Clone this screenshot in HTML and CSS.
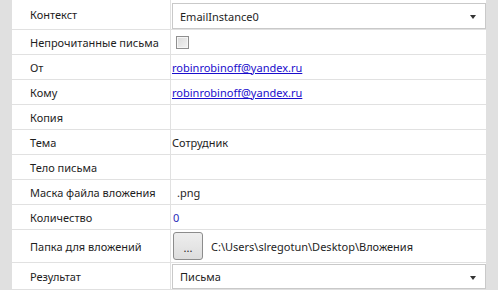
FILE: index.html
```html
<!DOCTYPE html>
<html lang="ru">
<head>
<meta charset="utf-8">
<link rel="stylesheet" href="styles.css">
</head>
<body>
<div class="frame">
  <div class="grid">
    <div class="row first">
      <div class="label">Контекст</div>
      <div class="value"><div class="combo"><span class="combo-text">EmailInstance0</span><span class="arrow"></span></div></div>
    </div>
    <div class="row">
      <div class="label">Непрочитанные письма</div>
      <div class="value"><span class="checkbox"></span></div>
    </div>
    <div class="row">
      <div class="label">От</div>
      <div class="value"><a class="link" href="#">robinrobinoff@yandex.ru</a></div>
    </div>
    <div class="row">
      <div class="label">Кому</div>
      <div class="value"><a class="link" href="#">robinrobinoff@yandex.ru</a></div>
    </div>
    <div class="row">
      <div class="label">Копия</div>
      <div class="value"></div>
    </div>
    <div class="row">
      <div class="label">Тема</div>
      <div class="value">Сотрудник</div>
    </div>
    <div class="row">
      <div class="label">Тело письма</div>
      <div class="value"></div>
    </div>
    <div class="row">
      <div class="label">Маска файла вложения</div>
      <div class="value indent">.png</div>
    </div>
    <div class="row">
      <div class="label">Количество</div>
      <div class="value number">0</div>
    </div>
    <div class="row folder">
      <div class="label">Папка для вложений</div>
      <div class="value"><span class="btn">...</span><span class="path">C:\Users\slregotun\Desktop\Вложения</span></div>
    </div>
    <div class="row last">
      <div class="label">Результат</div>
      <div class="value"><div class="combo"><span class="combo-text">Письма</span><span class="arrow"></span></div></div>
    </div>
  </div>
</div>
</body>
</html>
```
FILE: styles.css
```css
html, body {
  margin: 0;
  padding: 0;
}
body {
  background: #e0e0e0;
  width: 498px;
  height: 290px;
  overflow: hidden;
  font-family: "Noto Sans", "Open Sans", sans-serif;
  font-size: 11px;
  color: #1e1e1e;
}
.frame {
  display: flex;
  padding: 0 12px 0 12px;
}
.grid {
  width: 474px;
  background: #ffffff;
  display: flex;
  flex-direction: column;
}
.row {
  display: grid;
  grid-template-columns: 158px 316px;
  height: 24px;
  border-bottom: 1px solid #e1e1e1;
}
.row.first {
  height: 29px;
}
.row.folder {
  height: 32px;
}
.row.last {
  height: 26px;
  border-bottom: none;
}
.label {
  display: flex;
  align-items: center;
  padding-left: 18px;
  white-space: nowrap;
}
.value {
  display: flex;
  align-items: center;
  border-left: 1px solid #e1e1e1;
  padding-left: 1px;
  white-space: nowrap;
}
.value.indent {
  padding-left: 6px;
}
.value.number {
  padding-left: 2px;
  color: #2a2ab8;
}
.link {
  color: #1a0dcc;
  text-decoration: underline;
}
.combo {
  box-sizing: border-box;
  width: 315px;
  height: 26px;
  border: 1px solid #c9c9c9;
  background: #ffffff;
  display: flex;
  align-items: center;
  justify-content: space-between;
  padding: 0 9px 0 7px;
  margin-top: 3px;
  align-self: flex-start;
}
.row.last .combo {
  margin-top: 1px;
  height: 25px;
}
.arrow {
  width: 0;
  height: 0;
  border-left: 3.5px solid transparent;
  border-right: 3.5px solid transparent;
  border-top: 4px solid #333333;
  position: relative;
  top: 1px;
}
.checkbox {
  box-sizing: border-box;
  width: 13px;
  height: 13px;
  margin-left: 4px;
  border: 1px solid #8f8f8f;
  background: linear-gradient(135deg, #dadada 0%, #f4f4f4 100%);
  box-shadow: inset 0 0 0 1px #f6f6f6;
}
.btn {
  box-sizing: border-box;
  width: 30px;
  height: 28px;
  margin-left: 1px;
  border: 1px solid #8c8c8c;
  border-radius: 3px;
  background: linear-gradient(#eeeeee, #dddddd);
  display: flex;
  align-items: center;
  justify-content: center;
  line-height: 1;
  padding-top: 2px;
}
.path {
  margin-left: 8px;
}
```
